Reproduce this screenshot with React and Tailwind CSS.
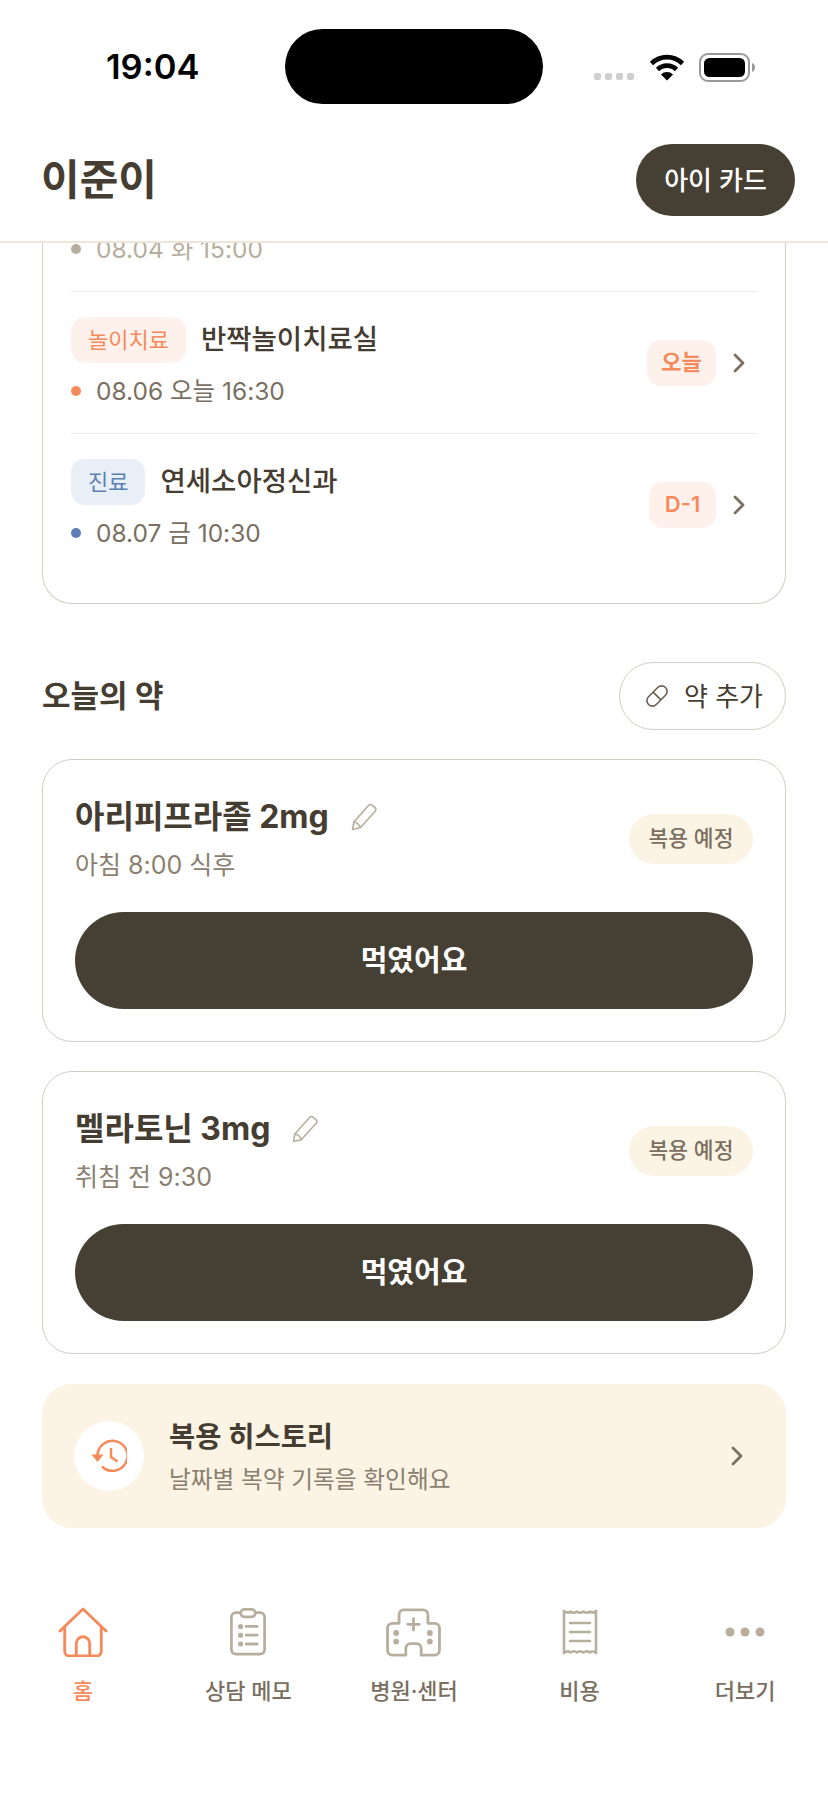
const fontStack = { fontFamily: 'Inter, "Noto Sans CJK KR", sans-serif' }

const Chevron = ({ color = '#7a6f61' }) => (
  <svg width="14" height="22" viewBox="0 0 14 22" fill="none" stroke={color} strokeWidth="2.8" strokeLinecap="round" strokeLinejoin="round">
    <path d="M3 3l8 8-8 8" />
  </svg>
)

const Pencil = () => (
  <svg width="28" height="28" viewBox="0 0 28 28" fill="none" stroke="#b8ae9e" strokeWidth="1.6" strokeLinejoin="round" strokeLinecap="round">
    <path d="M2.500 26.500l1.400-7.500L18.500 2.500a2.600 2.600 0 0 1 3.600-.3l2.800 2.400a2.600 2.600 0 0 1 .3 3.600L10.500 24.500z" />
    <path d="M3.900 19c2.600.2 5.200 2.500 6.600 5.500" />
  </svg>
)

const Schedule = ({ tag, tagClass, name, date, dotClass, dday, ddayWidth }) => (
  <div className="flex items-center justify-between pt-[25px]">
    <div>
      <div className="flex items-center gap-[15px]">
        <span className={`flex h-[46px] items-center rounded-[14px] px-[17px] text-[22px] ${tagClass}`}>{tag}</span>
        <span className="text-[27.5px] font-medium text-[#453c32]">{name}</span>
      </div>
      <div className="mt-[14px] flex h-[28px] items-center gap-[15px]">
        <span className={`h-[10px] w-[10px] rounded-full ${dotClass}`} />
        <span className="text-[24.5px] text-[#7a6f61]">{date}</span>
      </div>
    </div>
    <div className="mt-[3px] flex items-center gap-[16px] pr-[11px]">
      <span className={`flex h-[46px] items-center justify-center rounded-[14px] bg-[#fef1eb] text-[22px] font-semibold text-[#f58a5c] ${ddayWidth}`}>{dday}</span>
      <Chevron />
    </div>
  </div>
)

const MedCard = ({ name, time }) => (
  <div className="mt-[29px] rounded-[30px] border border-[#d4cdc0] bg-white px-[32px] pt-[30px] pb-[32px]">
    <div className="flex items-center justify-between">
      <div>
        <div className="flex h-[54px] items-center gap-[21px]">
          <span className="text-[32px] font-bold text-[#453c32]">{name}</span>
          <Pencil />
        </div>
        <div className="mt-[3px] text-[25px] leading-[36px] text-[#8a7f70]">{time}</div>
      </div>
      <span className="mt-[4px] flex h-[50px] w-[124px] items-center justify-center rounded-full bg-[#fbf3e4] text-[21.5px] font-medium text-[#7a6f61]">복용 예정</span>
    </div>
    <button className="mt-[29px] flex h-[97px] w-full items-center justify-center rounded-full bg-[#463f34] text-[29px] font-bold text-white">먹였어요</button>
  </div>
)

const navItems = [
  {
    label: '홈',
    active: true,
    icon: (
      <svg width="50" height="50" viewBox="0 0 52 52" fill="none" stroke="#f58a5c" strokeWidth="3" strokeLinecap="round" strokeLinejoin="round">
        <path d="M2 25L26 2l24 23" />
        <path d="M7 21v25a5 5 0 0 0 5 5h28a5 5 0 0 0 5-5V21" />
        <path d="M19 51V38a7 7 0 0 1 14 0v13" />
      </svg>
    ),
  },
  {
    label: '상담 메모',
    icon: (
      <svg width="48" height="48" viewBox="0 0 52 52" fill="none" stroke="#b8ae9e" strokeWidth="3" strokeLinecap="round" strokeLinejoin="round">
        <path d="M18 5h-5a5 5 0 0 0-5 5v35a5 5 0 0 0 5 5h26a5 5 0 0 0 5-5V10a5 5 0 0 0-5-5h-5" />
        <rect x="18" y="1.500" width="16" height="8" rx="4" />
        <path d="M24 20h12M24 29.500h12M24 39h12" />
        <circle cx="18" cy="20" r="1.300" fill="#b8ae9e" />
        <circle cx="18" cy="29.500" r="1.300" fill="#b8ae9e" />
        <circle cx="18" cy="39" r="1.300" fill="#b8ae9e" />
      </svg>
    ),
  },
  {
    label: '병원·센터',
    icon: (
      <svg width="57" height="50" viewBox="0 0 58 52" fill="none" stroke="#b8ae9e" strokeWidth="2.900" strokeLinecap="round" strokeLinejoin="round">
        <path d="M21 50H7a5 5 0 0 1-5-5V22a5 5 0 0 1 5-5h7V8a5 5 0 0 1 5-5h20a5 5 0 0 1 5 5v9h7a5 5 0 0 1 5 5v23a5 5 0 0 1-5 5H37" />
        <path d="M21 50v-7a5 5 0 0 1 5-5h6a5 5 0 0 1 5 5v7" />
        <path d="M29 12v12M23 18h12" />
        <circle cx="11" cy="27" r="1.600" fill="#b8ae9e" />
        <circle cx="11" cy="36" r="1.600" fill="#b8ae9e" />
        <circle cx="46" cy="27" r="1.600" fill="#b8ae9e" />
        <circle cx="46" cy="36" r="1.600" fill="#b8ae9e" />
      </svg>
    ),
  },
  {
    label: '비용',
    icon: (
      <svg width="36" height="46" viewBox="0 0 36 46" fill="none" stroke="#b8ae9e" strokeWidth="2.600" strokeLinejoin="round" strokeLinecap="round">
        <path d="M2 2c2.500 2 5 2 6.500 .5 2 1.500 4.500 1.500 6.500 0 2 1.500 4.500 1.500 6.500 0 2 1.500 4.500 1.500 6.500 0 1.500 1.500 4 1.500 6 -.5v42c-2-2-4.500-2-6-.5-2-1.500-4.500-1.500-6.500 0-2-1.500-4.500-1.500-6.500 0-2-1.500-4.500-1.500-6.500 0-1.500-1.500-4-1.500-6.500 .5z" />
        <path d="M8 14h20M8 23h20M8 32h20" />
      </svg>
    ),
  },
  {
    label: '더보기',
    icon: (
      <svg width="52" height="52" viewBox="0 0 52 52" fill="#b8ae9e">
        <circle cx="11" cy="26" r="4.500" />
        <circle cx="26" cy="26" r="4.500" />
        <circle cx="41" cy="26" r="4.500" />
      </svg>
    ),
  },
]

export default function App() {
  return (
    <div className="flex h-[1800px] w-[828px] flex-col overflow-hidden bg-white" style={fontStack}>
      {/* status bar */}
      <div className="flex h-[122px] shrink-0 items-start">
        <div className="w-[285px] pt-[47px] pl-[106px] text-[34.5px] leading-[40px] font-semibold text-black">19:04</div>
        <div className="mt-[29px] h-[75px] w-[258px] rounded-[38px] bg-black" />
        <div className="ml-[51px] flex gap-[4px] pt-[73px]">
          <span className="h-[7px] w-[7px] rounded-[2px] bg-[#cfcfcf]" />
          <span className="h-[7px] w-[7px] rounded-[2px] bg-[#cfcfcf]" />
          <span className="h-[7px] w-[7px] rounded-[2px] bg-[#cfcfcf]" />
          <span className="h-[7px] w-[7px] rounded-[2px] bg-[#cfcfcf]" />
        </div>
        <svg className="mt-[54px] ml-[15px]" width="36" height="27" viewBox="0 0 36 27" fill="none" stroke="#000" strokeWidth="4.600">
          <path d="M2.500 9.500a22 22 0 0 1 31 0" />
          <path d="M8.500 15.500a13.500 13.500 0 0 1 19 0" />
          <path d="M18 26.500l-6-6a8.500 8.500 0 0 1 12 0z" fill="#000" stroke="none" />
        </svg>
        <svg className="mt-[52px] ml-[14px]" width="58" height="31" viewBox="0 0 58 31" fill="none">
          <rect x="1" y="2" width="49" height="27" rx="8" stroke="#999" strokeWidth="2" />
          <rect x="5" y="6" width="41" height="19" rx="5.500" fill="#000" />
          <path d="M53 11c2 .6 3 2.300 3 4.500s-1 3.900-3 4.500z" fill="#999" />
        </svg>
      </div>

      {/* header */}
      <div className="flex h-[121px] shrink-0 items-start justify-between border-b-2 border-[#efe6d9] pt-[22px] pr-[33px] pl-[41px]">
        <h1 className="text-[42px] leading-[72px] font-bold text-[#453c32]">이준이</h1>
        <button className="flex h-[72px] w-[159px] items-center justify-center rounded-full bg-[#463f34] text-[26px] font-medium text-white">아이 카드</button>
      </div>

      {/* scrolled content, first schedule row cut off by the header */}
      <div className="flex-1 overflow-hidden px-[42px]">
        <div className="-mt-[8px] rounded-b-[30px] border-x border-b border-[#d4cdc0] px-[28px] pb-[56px]">
          <div className="flex h-[28px] items-center gap-[15px]">
            <span className="h-[10px] w-[10px] rounded-full bg-[#b8ae9e]" />
            <span className="text-[24.5px] text-[#b8ae9e]">08.04 화 15:00</span>
          </div>
          <div className="mt-[28px] border-b border-[#f0ebe2]" />
          <div className="border-b border-[#f0ebe2] pb-[28px]">
            <Schedule tag="놀이치료" tagClass="bg-[#fef1eb] text-[#f58a5c]" name="반짝놀이치료실" date="08.06 오늘 16:30" dotClass="bg-[#f58a5c]" dday="오늘" ddayWidth="w-[69px]" />
          </div>
          <Schedule tag="진료" tagClass="bg-[#e9eff7] text-[#5b7fb5]" name="연세소아정신과" date="08.07 금 10:30" dotClass="bg-[#5b7fb5]" dday="D-1" ddayWidth="w-[67px]" />
        </div>

        <div className="mt-[58px] flex items-center justify-between">
          <h2 className="text-[31px] font-bold text-[#453c32]">오늘의 약</h2>
          <button className="flex h-[68px] w-[167px] items-center justify-center gap-[14px] rounded-full border border-[#d4cdc0] pl-[2px] text-[26px] text-[#453c32]">
            <svg width="26" height="26" viewBox="0 0 26 26" fill="none" stroke="#6b6052" strokeWidth="1.600">
              <rect x="1" y="7.500" width="24" height="11" rx="5.500" transform="rotate(-45 13 13)" />
              <path d="M9.100 9.100l7.800 7.800" />
            </svg>
            약 추가
          </button>
        </div>

        <MedCard name="아리피프라졸 2mg" time="아침 8:00 식후" />
        <MedCard name="멜라토닌 3mg" time="취침 전 9:30" />

        <div className="mt-[30px] flex h-[144px] items-center justify-between rounded-[30px] bg-[#fbf3e4] pr-[42px] pl-[32px]">
          <div className="flex items-center gap-[25px]">
            <span className="flex h-[70px] w-[70px] items-center justify-center rounded-full bg-white">
              <svg width="36" height="34" viewBox="0 0 36 34" fill="none" stroke="#f58a5c" strokeWidth="2.500">
                <path d="M6.500 16.500A15 15 0 1 1 11 27.500" />
                <path d="M0.500 15.500h12l-6 7.500z" fill="#f58a5c" stroke="none" />
                <path d="M20 9v9l6.500 4.500" />
              </svg>
            </span>
            <div className="mt-[3px]">
              <div className="text-[28.5px] leading-[38px] font-bold text-[#453c32]">복용 히스토리</div>
              <div className="mt-[7px] text-[23.7px] leading-[34px] text-[#8a7f70]">날짜별 복약 기록을 확인해요</div>
            </div>
          </div>
          <Chevron />
        </div>

        {/* bottom tabs */}
        <div className="-mx-[42px] mt-[78px] grid grid-cols-5">
          {navItems.map((item) => (
            <div key={item.label} className="flex flex-col items-center">
              <div className="flex h-[52px] items-center">{item.icon}</div>
              <span className={`mt-[18px] text-[22px] leading-[30px] font-medium ${item.active ? 'text-[#f58a5c]' : 'text-[#7a6f61]'}`}>{item.label}</span>
            </div>
          ))}
        </div>
      </div>
    </div>
  )
}
